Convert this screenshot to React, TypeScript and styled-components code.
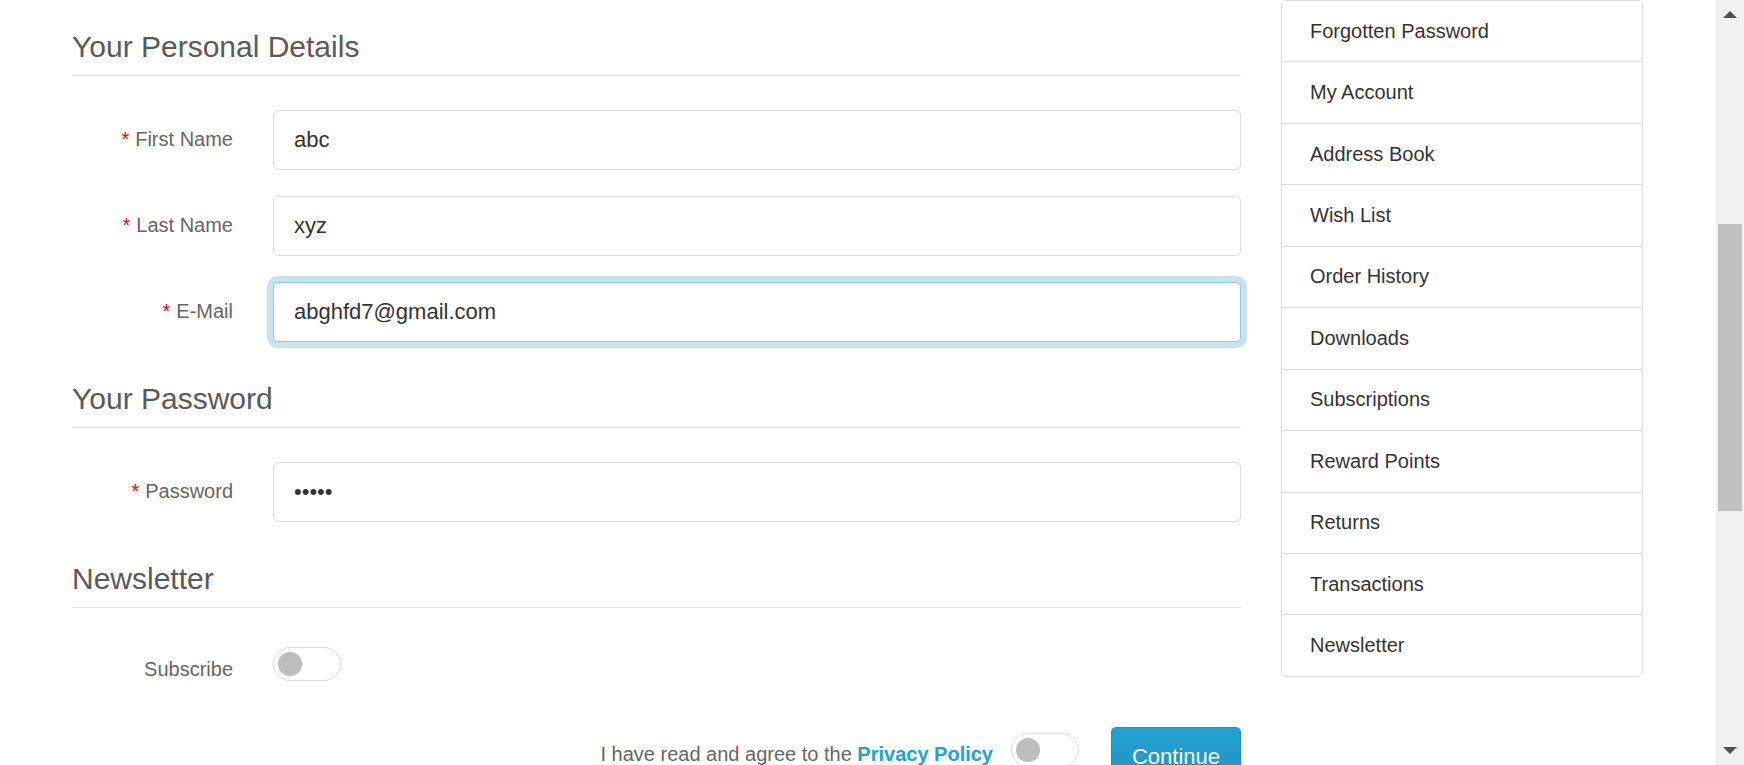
import React from "react";
import styled, { createGlobalStyle } from "styled-components";

const GlobalStyle = createGlobalStyle`
  html, body {
    margin: 0;
    padding: 0;
    background: #ffffff;
    overflow: hidden;
  }
  body {
    font-family: "Liberation Sans", Arial, sans-serif;
    color: #666666;
  }
  * { box-sizing: border-box; }
`;

const Page = styled.div`
  display: flex;
  align-items: flex-start;
  gap: 40px;
  width: 1716px;
  padding-left: 72px;
`;

const Main = styled.main`
  width: 1169px;
  display: flex;
  flex-direction: column;
  gap: 34px;
  padding-top: 24px;
`;

const Section = styled.section`
  display: flex;
  flex-direction: column;
  gap: 26px;
`;

const Legend = styled.h2`
  margin: 0 0 8px 0;
  font-weight: 400;
  font-size: 30px;
  line-height: 45px;
  color: #5a5a5a;
  padding-bottom: 6px;
  border-bottom: 1px solid #e5e5e5;
`;

const Row = styled.div<{ $labelTop?: number }>`
  display: grid;
  grid-template-columns: 161px 1fr;
  column-gap: 40px;
  align-items: start;
  & > label {
    padding-top: ${(p) => p.$labelTop ?? 14}px;
  }
`;

const Label = styled.label`
  display: block;
  text-align: right;
  font-size: 20px;
  line-height: 30px;
  color: #666666;
`;

const Req = styled.span`
  color: #ff0000;
  margin-right: 6px;
`;

const Input = styled.input<{ $focused?: boolean }>`
  display: block;
  width: 100%;
  height: 60px;
  padding: 0 20px;
  font-family: "Liberation Sans", Arial, sans-serif;
  font-size: 22px;
  color: #333333;
  background: #ffffff;
  border: 1px solid ${(p) => (p.$focused ? "#94c6de" : "#dedede")};
  border-radius: 5px;
  outline: none;
  box-shadow: ${(p) => (p.$focused ? "0 0 0 6px #c8e4f0" : "none")};
`;

const Switch = styled.span<{ $top?: number }>`
  display: inline-flex;
  align-items: center;
  width: 68px;
  height: 34px;
  margin-top: ${(p) => p.$top ?? 0}px;
  padding-left: 4px;
  border: 1px solid #dddddd;
  border-radius: 17px;
  background: #ffffff;
  flex-shrink: 0;
  &::before {
    content: "";
    width: 24px;
    height: 24px;
    border-radius: 50%;
    background: #bdbdbd;
  }
`;

const Actions = styled.div`
  display: flex;
  justify-content: flex-end;
  align-items: flex-start;
  margin-top: 17px;
`;

const Agree = styled.span`
  font-size: 20px;
  line-height: 30px;
  padding-top: 12px;
  color: #666666;
  margin-right: 18px;
`;

const PolicyLink = styled.a`
  color: #23a1d1;
  font-weight: 700;
  text-decoration: none;
`;

const ContinueButton = styled.button`
  margin-left: 32px;
  width: 130px;
  padding: 12px 0;
  font-family: "Liberation Sans", Arial, sans-serif;
  font-size: 22px;
  line-height: 33px;
  color: #ffffff;
  background: linear-gradient(#24a2d2, #1f92c2);
  border: 1px solid #1f90bf;
  border-radius: 5px;
  cursor: pointer;
`;

const Sidebar = styled.aside`
  width: 362px;
`;

const ListGroup = styled.nav`
  display: flex;
  flex-direction: column;
  border: 1px solid #dddddd;
  border-radius: 5px;
  overflow: hidden;
`;

const ListItem = styled.a`
  display: flex;
  align-items: center;
  height: 61.45px;
  padding: 0 28px;
  font-size: 20px;
  color: #333333;
  text-decoration: none;
  background: #ffffff;
  & + & {
    border-top: 1px solid #dddddd;
  }
  &:first-child {
    height: 60.45px;
  }
`;

const Scrollbar = styled.div`
  position: fixed;
  top: 0;
  right: 0;
  width: 28px;
  height: 765px;
  background: #f1f1f1;
  display: flex;
  flex-direction: column;
  align-items: center;
  justify-content: space-between;
  padding: 11px 0 11px;
`;

const Thumb = styled.div`
  position: absolute;
  left: 2px;
  top: 224px;
  width: 24px;
  height: 287px;
  background: #c1c1c1;
`;

const Arrow = styled.svg`
  display: block;
  width: 14px;
  height: 7px;
`;

const menu = [
  "Forgotten Password",
  "My Account",
  "Address Book",
  "Wish List",
  "Order History",
  "Downloads",
  "Subscriptions",
  "Reward Points",
  "Returns",
  "Transactions",
  "Newsletter",
];

export default function App() {
  return (
    <>
      <GlobalStyle />
      <Page>
        <Main>
          <Section>
            <Legend>Your Personal Details</Legend>
            <Row>
              <Label>
                <Req>*</Req>First Name
              </Label>
              <Input readOnly defaultValue="abc" />
            </Row>
            <Row>
              <Label>
                <Req>*</Req>Last Name
              </Label>
              <Input readOnly defaultValue="xyz" />
            </Row>
            <Row>
              <Label>
                <Req>*</Req>E-Mail
              </Label>
              <Input readOnly $focused defaultValue="abghfd7@gmail.com" />
            </Row>
          </Section>
          <Section>
            <Legend>Your Password</Legend>
            <Row>
              <Label>
                <Req>*</Req>Password
              </Label>
              <Input readOnly type="password" defaultValue="12345" />
            </Row>
          </Section>
          <Section>
            <Legend>Newsletter</Legend>
            <Row $labelTop={12}>
              <Label>Subscribe</Label>
              <div>
                <Switch $top={5} />
              </div>
            </Row>
            <Actions>
              <Agree>
                I have read and agree to the <PolicyLink href="#">Privacy Policy</PolicyLink>
              </Agree>
              <Switch $top={6} />
              <ContinueButton>Continue</ContinueButton>
            </Actions>
          </Section>
        </Main>
        <Sidebar>
          <ListGroup>
            {menu.map((m) => (
              <ListItem key={m} href="#">
                {m}
              </ListItem>
            ))}
          </ListGroup>
        </Sidebar>
      </Page>
      <Scrollbar>
        <Arrow viewBox="0 0 14 7">
          <path d="M0 7 L7 0 L14 7 Z" fill="#505050" />
        </Arrow>
        <Thumb />
        <Arrow viewBox="0 0 14 7">
          <path d="M0 0 L14 0 L7 7 Z" fill="#505050" />
        </Arrow>
      </Scrollbar>
    </>
  );
}
